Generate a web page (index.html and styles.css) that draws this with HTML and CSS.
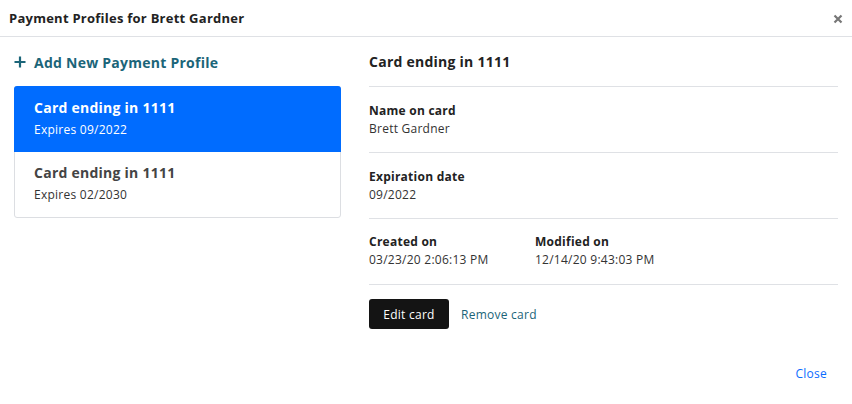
FILE: index.html
```html
<!DOCTYPE html>
<html>
<head>
<meta charset="utf-8">
<link rel="stylesheet" href="styles.css">
</head>
<body>
<div class="modal">
  <div class="modal-header">
    <div class="modal-title">Payment Profiles for Brett Gardner</div>
    <button class="close-x" aria-label="Close">
      <svg width="10" height="10" viewBox="0 0 10 10"><path d="M1.5 1.5 L8.5 8.5 M8.5 1.5 L1.5 8.5" stroke="#777" stroke-width="2.2" stroke-linecap="butt"/></svg>
    </button>
  </div>
  <div class="modal-body">
    <div class="left-col">
      <a class="add-link" href="#">
        <svg class="plus" width="12" height="12" viewBox="0 0 12 12"><path d="M6 0.5 V11.5 M0.5 6 H11.5" stroke="#1b6579" stroke-width="2.2"/></svg>
        <span>Add New Payment Profile</span>
      </a>
      <div class="card-list">
        <div class="card-item active">
          <div class="card-title">Card ending in 1111</div>
          <div class="card-sub">Expires 09/2022</div>
        </div>
        <div class="card-item">
          <div class="card-title">Card ending in 1111</div>
          <div class="card-sub">Expires 02/2030</div>
        </div>
      </div>
    </div>
    <div class="right-col">
      <div class="detail-head">Card ending in 1111</div>
      <div class="detail-section">
        <div class="field">
          <div class="label">Name on card</div>
          <div class="value">Brett Gardner</div>
        </div>
      </div>
      <div class="detail-section">
        <div class="field">
          <div class="label">Expiration date</div>
          <div class="value">09/2022</div>
        </div>
      </div>
      <div class="detail-section two">
        <div class="field">
          <div class="label">Created on</div>
          <div class="value">03/23/20 2:06:13 PM</div>
        </div>
        <div class="field">
          <div class="label">Modified on</div>
          <div class="value">12/14/20 9:43:03 PM</div>
        </div>
      </div>
      <div class="actions">
        <button class="btn-dark">Edit card</button>
        <a class="link-teal" href="#">Remove card</a>
      </div>
    </div>
  </div>
  <div class="modal-footer">
    <a class="close-link" href="#">Close</a>
  </div>
</div>
</body>
</html>
```
FILE: styles.css
```css
* { box-sizing: border-box; }
html, body { margin: 0; padding: 0; background: #fff; }
body {
  font-family: "Open Sans", "Noto Sans", sans-serif;
  color: #222;
  width: 852px;
  height: 404px;
  overflow: hidden;
  letter-spacing: 0.25px;
}
.modal {
  width: 852px;
  height: 404px;
  display: flex;
  flex-direction: column;
}
.modal-header {
  height: 37px;
  border-bottom: 1px solid #dfe1e5;
  display: flex;
  align-items: center;
  justify-content: space-between;
  padding: 0 9px 0 9px;
}
.modal-title {
  font-size: 13px;
  font-weight: 700;
  color: #222;
  line-height: 18px;
  margin-top: -1px;
}
.close-x {
  border: 0;
  background: none;
  padding: 0;
  width: 10px;
  height: 10px;
  display: flex;
  margin-right: 0;
  margin-top: 1px;
}
.modal-body {
  display: flex;
  padding: 15px 14px 0 14px;
  gap: 28px;
}
.left-col {
  width: 327px;
  flex: none;
}
.add-link {
  display: flex;
  align-items: center;
  gap: 8px;
  height: 20px;
  color: #1b6579;
  font-weight: 700;
  font-size: 14px;
  text-decoration: none;
  margin-bottom: 14px;
}
.plus { flex: none; }
.card-list {
  border: 1px solid #dcdee2;
  border-radius: 3px;
}
.card-item {
  padding: 11px 19px 11px;
  height: 65px;
}
.card-item.active {
  background: #006cff;
  color: #fff;
  margin: -1px -1px 0;
  padding: 12px 20px 11px;
  border-radius: 3px 3px 0 0;
  height: 66px;
}
.card-title {
  font-size: 14px;
  font-weight: 700;
  line-height: 20px;
  color: #444;
}
.card-sub {
  font-size: 12px;
  line-height: 18px;
  margin-top: 3px;
  color: #333;
}
.active .card-title, .active .card-sub { color: #fff; }
.right-col {
  flex: 1;
}
.detail-head {
  font-size: 14px;
  font-weight: 700;
  line-height: 20px;
  height: 35px;
  border-bottom: 1px solid #dfe1e5;
  color: #222;
}
.detail-section {
  padding: 15px 0 14px;
  border-bottom: 1px solid #dfe1e5;
  display: flex;
}
.detail-section.two { padding: 14px 0 15px; }
.field { width: 166px; }
.label {
  font-size: 12px;
  font-weight: 700;
  line-height: 18px;
  color: #222;
}
.value {
  font-size: 12px;
  line-height: 18px;
  color: #333;
}
.actions {
  display: flex;
  align-items: center;
  gap: 12px;
  padding-top: 14px;
}
.btn-dark {
  background: #141414;
  color: #fff;
  border: 0;
  border-radius: 3px;
  height: 30px;
  width: 80px;
  font-family: inherit;
  font-size: 12px;
  letter-spacing: 0.25px;
  padding: 0;
}
.link-teal {
  color: #1b6579;
  font-size: 12px;
  text-decoration: none;
}
.modal-footer {
  margin-top: auto;
  display: flex;
  justify-content: flex-end;
  padding: 0 25px 21px 0;
}
.close-link {
  color: #0a6cff;
  font-size: 12px;
  line-height: 18px;
  text-decoration: none;
}
```
